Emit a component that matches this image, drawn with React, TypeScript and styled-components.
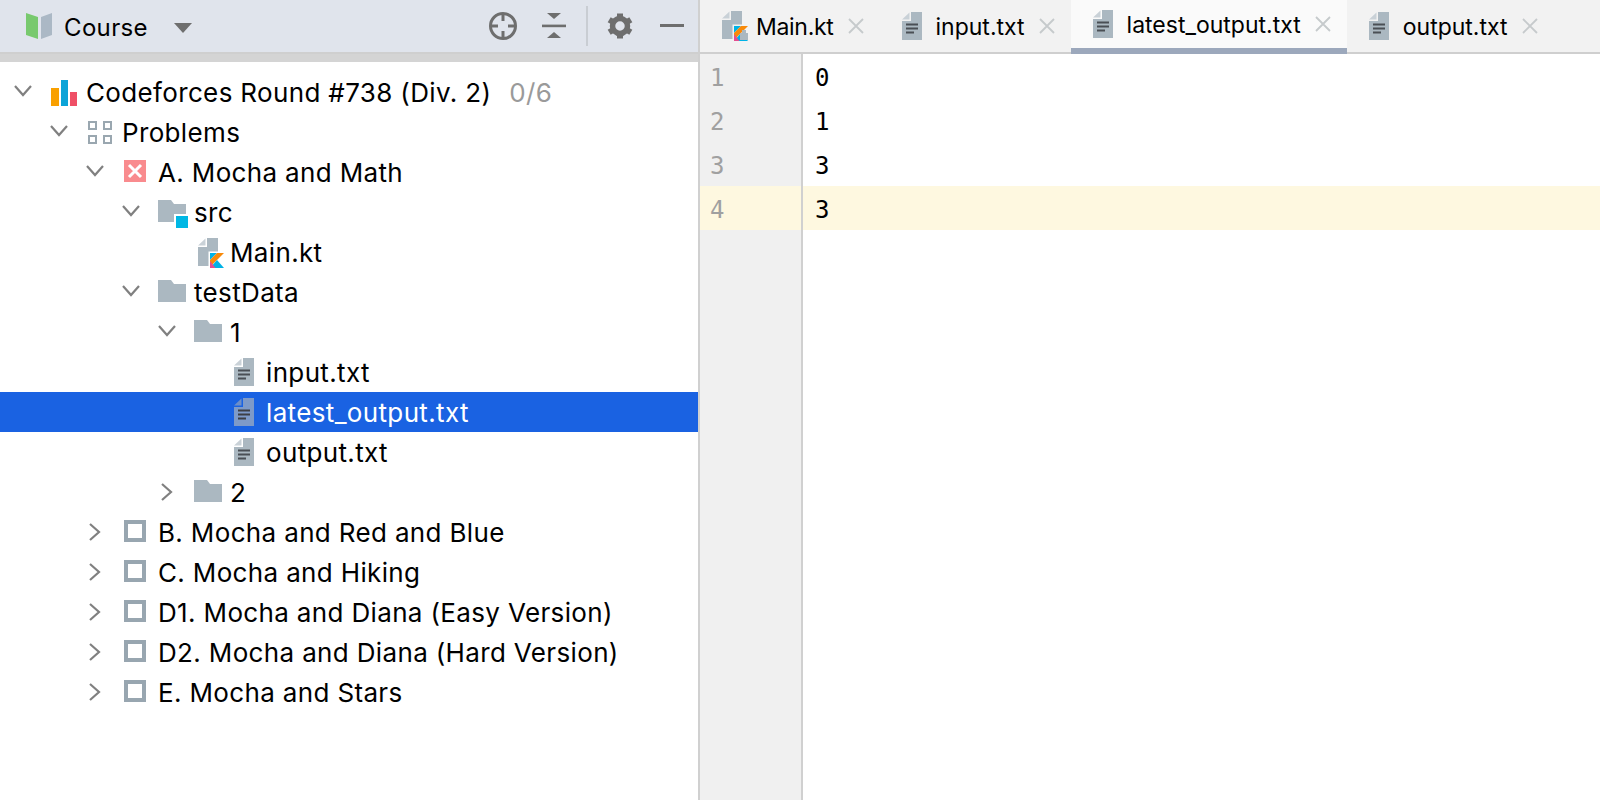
import styled, { createGlobalStyle } from 'styled-components';

const GlobalStyle = createGlobalStyle`
  html, body {
    margin: 0;
    padding: 0;
    background: #fff;
    overflow: hidden;
  }
  body {
    font-family: Inter, "Liberation Sans", sans-serif;
  }
`;

const ICON_GRAY = '#abb8c1';
const FOLD_GRAY = '#c9d1d7';

function FileGlyph({ x = 0, y = 0, body = ICON_GRAY, fold = FOLD_GRAY, ink = '#4a4f55' }: { x?: number; y?: number; body?: string; fold?: string; ink?: string }) {
  return (
    <g transform={`translate(${x} ${y})`}>
      <path d="M9 0H20V28H0V9H9Z" fill={body} />
      <path d="M0 7.5L7.5 0.5V7.5Z" fill={fold} />
      <rect x="4" y="11.5" width="12" height="2" fill={ink} />
      <rect x="4" y="15.5" width="12" height="2" fill={ink} />
      <rect x="4" y="19.5" width="8" height="2" fill={ink} />
    </g>
  );
}

// file sheet with the Kotlin mark in its lower right corner, the tab one has a lock-like gray corner
function KotlinFileGlyph({ x = 0, y = 0, dimmed = false }: { x?: number; y?: number; dimmed?: boolean }) {
  return (
    <g transform={`translate(${x} ${y})`}>
      <path d="M9 0H20V28H0V9H9Z" fill={ICON_GRAY} />
      <path d="M0 7.5L7.5 0.5V7.5Z" fill={FOLD_GRAY} />
      <rect x="10.5" y="13.5" width="17" height="17" fill={dimmed ? '#f2f2f2' : '#fff'} />
      <path d="M12 15H19L12 22Z" fill="#00b2e6" />
      <path d="M19 15H26L12 29V22Z" fill="#f88909" />
      <path d="M19 22L26 30H12Z" fill="#00b2e6" />
      <path d="M12 23L17.5 30H12Z" fill="#e44d90" />
      {dimmed && <path d="M18 22H20V19H24V22H26V29H18Z" fill={ICON_GRAY} />}
    </g>
  );
}

const treeIcons = {
  chart: (
    <>
      <rect x="3" y="16" width="8" height="18" fill="#f9a000" />
      <rect x="13" y="8" width="7" height="26" fill="#0ca4d8" />
      <rect x="22" y="20" width="7" height="14" fill="#ef4f66" />
    </>
  ),
  grid: (
    <g fill="none" stroke="#9aa7b0" strokeWidth="2">
      <rect x="5" y="10" width="7" height="7" />
      <rect x="20" y="10" width="7" height="7" />
      <rect x="5" y="24" width="7" height="7" />
      <rect x="20" y="24" width="7" height="7" />
    </g>
  ),
  failed: (
    <>
      <rect x="4" y="8" width="22" height="22" fill="#f98b8e" />
      <path d="M9 13L21 25M21 13L9 25" stroke="#fff" strokeWidth="3" />
    </>
  ),
  source: (
    <>
      <path d="M2 8H15L18 12H30V30H2Z" fill={ICON_GRAY} />
      <rect x="18" y="22" width="16" height="16" fill="#fff" />
      <rect x="20" y="24" width="12" height="12" fill="#00b7e4" />
    </>
  ),
  folder: <path d="M2 8H15L18 12H30V30H2Z" fill={ICON_GRAY} />,
  kotlin: <KotlinFileGlyph x={6} y={6} />,
  file: <FileGlyph x={6} y={6} />,
  fileSelected: <FileGlyph x={6} y={6} body="#7e9ac8" fold="#6f8fc6" ink="#3d3f45" />,
  unchecked: <rect x="6" y="10" width="18" height="18" fill="none" stroke="#98a6b0" strokeWidth="4" />,
};

type IconName = keyof typeof treeIcons;

type Node = {
  level: number;
  label: string;
  icon: IconName;
  open?: boolean;
  count?: string;
  selected?: boolean;
};

const nodes: Node[] = [
  { level: 0, label: 'Codeforces Round #738 (Div. 2)', icon: 'chart', open: true, count: '0/6' },
  { level: 1, label: 'Problems', icon: 'grid', open: true },
  { level: 2, label: 'A. Mocha and Math', icon: 'failed', open: true },
  { level: 3, label: 'src', icon: 'source', open: true },
  { level: 4, label: 'Main.kt', icon: 'kotlin' },
  { level: 3, label: 'testData', icon: 'folder', open: true },
  { level: 4, label: '1', icon: 'folder', open: true },
  { level: 5, label: 'input.txt', icon: 'file' },
  { level: 5, label: 'latest_output.txt', icon: 'fileSelected', selected: true },
  { level: 5, label: 'output.txt', icon: 'file' },
  { level: 4, label: '2', icon: 'folder', open: false },
  { level: 2, label: 'B. Mocha and Red and Blue', icon: 'unchecked', open: false },
  { level: 2, label: 'C. Mocha and Hiking', icon: 'unchecked', open: false },
  { level: 2, label: 'D1. Mocha and Diana (Easy Version)', icon: 'unchecked', open: false },
  { level: 2, label: 'D2. Mocha and Diana (Hard Version)', icon: 'unchecked', open: false },
  { level: 2, label: 'E. Mocha and Stars', icon: 'unchecked', open: false },
];

const tabs = [
  { label: 'Main.kt', kind: 'kotlin' },
  { label: 'input.txt', kind: 'file' },
  { label: 'latest_output.txt', kind: 'file', active: true },
  { label: 'output.txt', kind: 'file' },
];

const lines = ['0', '1', '3', '3'];

export default function App() {
  return (
    <Page>
      <GlobalStyle />
      <ProjectPanel>
        <PanelHeader>
          <BookIcon viewBox="0 0 26 26">
            <path d="M0 0L12 4V26L0 22Z" fill="#78c96e" />
            <path d="M15 4L26 0V22L15 26Z" fill="#abb8c5" />
          </BookIcon>
          <PanelTitle>Course</PanelTitle>
          <DropdownCaret viewBox="0 0 18 10">
            <path d="M0 0H18L9 10Z" fill="#6e6e6e" />
          </DropdownCaret>
          <HeaderActions>
            <ActionIcon $width={30} viewBox="0 0 30 30">
              <g fill="none" stroke="#6e6e6e" strokeWidth="3">
                <circle cx="15" cy="15" r="12.5" />
                <path d="M15 2V10M15 20V28M2 15H10M20 15H28" />
              </g>
            </ActionIcon>
            <ActionIcon $width={24} $left={24} viewBox="0 0 24 26">
              <g fill="#6e6e6e">
                <path d="M5 0H19L12 6Z" />
                <rect x="0" y="11.6" width="24" height="2.6" />
                <path d="M5 25H19L12 19Z" />
              </g>
            </ActionIcon>
            <HeaderDivider />
            <ActionIcon $width={26} $left={19} viewBox="0 0 26 26">
              <g fill="#6e6e6e">
                <circle cx="13" cy="13" r="7.5" fill="none" stroke="#6e6e6e" strokeWidth="5.5" />
                {[0, 60, 120, 180, 240, 300].map((angle) => (
                  <rect key={angle} x="10" y="0.5" width="6" height="5" transform={`rotate(${angle} 13 13)`} />
                ))}
              </g>
            </ActionIcon>
            <ActionIcon $width={24} $left={27} viewBox="0 0 24 4">
              <rect width="24" height="3" fill="#6e6e6e" />
            </ActionIcon>
          </HeaderActions>
        </PanelHeader>
        <HeaderShadow />
        <Tree>
          {nodes.map((node) => (
            <TreeRow key={node.label + node.level} $level={node.level} $selected={node.selected}>
              <Chevron viewBox="0 0 22 40">
                {node.open === true && (
                  <path d="M3 14L11 23L19 14" fill="none" stroke="#808080" strokeWidth="2.2" />
                )}
                {node.open === false && (
                  <path d="M6 12L15 20L6 28" fill="none" stroke="#808080" strokeWidth="2.2" />
                )}
              </Chevron>
              <TreeIcon viewBox="0 0 36 40">{treeIcons[node.icon]}</TreeIcon>
              <TreeLabel $selected={node.selected}>{node.label}</TreeLabel>
              {node.count && <TreeCount>{node.count}</TreeCount>}
            </TreeRow>
          ))}
        </Tree>
      </ProjectPanel>
      <EditorPanel>
        <TabBar>
          {tabs.map((tab) => (
            <Tab key={tab.label} $active={tab.active}>
              <TabIcon viewBox="0 0 24 30">
                {tab.kind === 'kotlin' ? <KotlinFileGlyph x={0} y={0} dimmed /> : <FileGlyph x={0} y={1} />}
              </TabIcon>
              <TabLabel $tight={tab.kind === 'kotlin'}>{tab.label}</TabLabel>
              <CloseIcon viewBox="0 0 16 16">
                <path d="M1 1L15 15M15 1L1 15" stroke="#c6cacc" strokeWidth="1.8" />
              </CloseIcon>
            </Tab>
          ))}
        </TabBar>
        <Editor>
          <Gutter>
            {lines.map((_, i) => (
              <LineNumber key={i} $current={i === 3}>
                {i + 1}
              </LineNumber>
            ))}
          </Gutter>
          <Code>
            {lines.map((line, i) => (
              <CodeLine key={i} $current={i === 3}>
                {line}
              </CodeLine>
            ))}
          </Code>
        </Editor>
      </EditorPanel>
    </Page>
  );
}

const Page = styled.div`
  display: flex;
  width: 1600px;
  height: 800px;
  overflow: hidden;
  background: #fff;
`;

const ProjectPanel = styled.div`
  flex: 0 0 698px;
  display: flex;
  flex-direction: column;
  border-right: 2px solid #d0d0d0;
`;

const PanelHeader = styled.div`
  display: flex;
  align-items: center;
  height: 52px;
  padding-left: 26px;
  background: #e0e4ec;
  border-bottom: 2px solid #cfcfcf;
`;

const BookIcon = styled.svg`
  width: 26px;
  height: 26px;
`;

const PanelTitle = styled.span`
  margin: 2px 0 0 12px;
  font-size: 24px;
  letter-spacing: 0.35px;
  color: #000;
`;

const DropdownCaret = styled.svg`
  width: 18px;
  height: 10px;
  margin-left: 26px;
  margin-top: 4px;
`;

const HeaderActions = styled.div`
  display: flex;
  align-items: center;
  margin-left: auto;
  padding-right: 14px;
`;

const ActionIcon = styled.svg<{ $width: number; $left?: number }>`
  display: block;
  width: ${(p) => p.$width}px;
  margin-left: ${(p) => p.$left ?? 0}px;
`;

const HeaderDivider = styled.div`
  width: 2px;
  height: 40px;
  margin-left: 20px;
  background: #c9cdd3;
`;

const HeaderShadow = styled.div`
  height: 8px;
  background: #d4d4d4;
`;

const Tree = styled.div`
  padding-top: 10px;
`;

const TreeRow = styled.div<{ $level: number; $selected?: boolean }>`
  display: flex;
  align-items: center;
  height: 40px;
  padding-left: ${(p) => 12 + p.$level * 36}px;
  background: ${(p) => (p.$selected ? '#1a62e2' : 'transparent')};
`;

const Chevron = styled.svg`
  flex: none;
  width: 22px;
  height: 40px;
`;

const TreeIcon = styled.svg`
  flex: none;
  width: 36px;
  height: 40px;
  margin: 0 2px 0 14px;
  overflow: visible;
`;

const TreeLabel = styled.span<{ $selected?: boolean }>`
  font-size: 26px;
  letter-spacing: 0.35px;
  white-space: nowrap;
  color: ${(p) => (p.$selected ? '#fff' : '#000')};
`;

const TreeCount = styled.span`
  margin-left: 18px;
  font-size: 26px;
  letter-spacing: 0.35px;
  color: #9a9a9a;
`;

const EditorPanel = styled.div`
  flex: 1;
  display: flex;
  flex-direction: column;
`;

const TabBar = styled.div`
  display: flex;
  height: 52px;
  background: #f2f2f2;
  border-bottom: 2px solid #cfcfcf;
`;

const Tab = styled.div<{ $active?: boolean }>`
  display: flex;
  align-items: center;
  height: ${(p) => (p.$active ? '48px' : '52px')};
  padding: 0 16px 0 22px;
  background: ${(p) => (p.$active ? '#fafafa' : 'transparent')};
  border-bottom: ${(p) => (p.$active ? '6px solid #9ca8bc' : 'none')};
`;

const TabIcon = styled.svg`
  flex: none;
  width: 24px;
  height: 30px;
  overflow: visible;
`;

const TabLabel = styled.span<{ $tight?: boolean }>`
  margin: 2px 0 0 10px;
  font-size: 23px;
  letter-spacing: ${(p) => (p.$tight ? '-0.3px' : '0')};
  white-space: nowrap;
  color: #000;
`;

const CloseIcon = styled.svg`
  flex: none;
  width: 16px;
  height: 16px;
  margin-left: 14px;
`;

const Editor = styled.div`
  flex: 1;
  display: flex;
`;

const Gutter = styled.div`
  flex: 0 0 101px;
  background: #f0f0f0;
  border-right: 2px solid #d0d0d0;
`;

const LineNumber = styled.div<{ $current?: boolean }>`
  height: 44px;
  padding-left: 10px;
  font: 24px/48px "DejaVu Sans Mono", "Liberation Mono", monospace;
  color: #a0a0a0;
  background: ${(p) => (p.$current ? '#fef8e0' : 'transparent')};
`;

const Code = styled.div`
  flex: 1;
`;

const CodeLine = styled.div<{ $current?: boolean }>`
  height: 44px;
  padding-left: 12px;
  font: 24px/48px "DejaVu Sans Mono", "Liberation Mono", monospace;
  color: #000;
  background: ${(p) => (p.$current ? '#fef8e0' : 'transparent')};
`;
